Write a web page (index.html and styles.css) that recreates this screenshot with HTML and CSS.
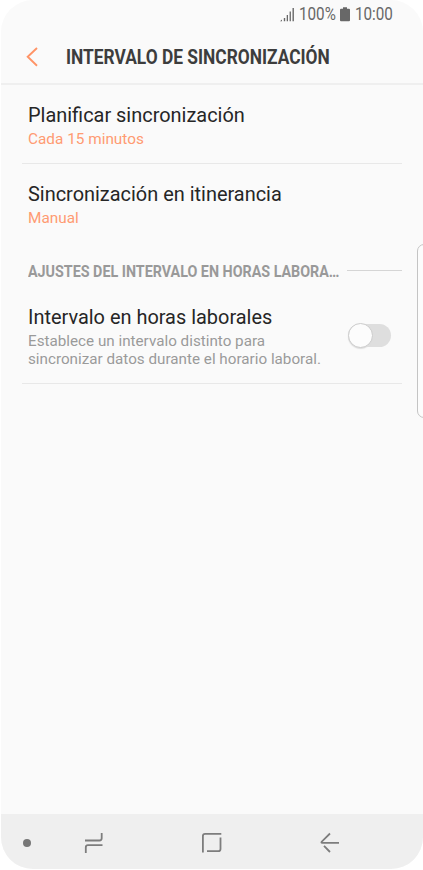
FILE: index.html
```html
<!DOCTYPE html>
<html lang="es">
<head>
<meta charset="utf-8">
<title>Intervalo de sincronización</title>
<link rel="stylesheet" href="styles.css">
</head>
<body>
<div class="screen">
  <div class="status">
    <svg class="signal" width="15" height="15" viewBox="0 0 15 15"><path d="M0 14.200l2-1.700v1.700zM3.800 11h1.400v3.200H3.800zM6.700 8h1.300v6.200H6.700zM9.600 4.500h1.300v9.700H9.600zM12.500 1h1.400v13.200h-1.400z"/></svg>
    <span class="charge"><span class="condensed">100%</span></span>
    <svg class="battery" width="10" height="15" viewBox="0 0 10 15"><path d="M3 .3h4v1.500h2q1 0 1 1v10.500q0 1-1 1H1q-1 0-1-1V2.800q0-1 1-1h2z"/></svg>
    <span class="clock"><span class="condensed">10:00</span></span>
  </div>
  <header class="header">
    <svg class="back" width="12" height="20" viewBox="0 0 12 20"><path d="M11 1L1.700 9.800l9.300 8.900"/></svg>
    <h1 class="title"><span class="condensed">INTERVALO DE SINCRONIZACIÓN</span></h1>
  </header>
  <main class="list">
    <section class="row row-first">
      <h2 class="name">Planificar sincronización</h2>
      <p class="value">Cada 15 minutos</p>
    </section>
    <section class="row row-second">
      <h2 class="name">Sincronización en itinerancia</h2>
      <p class="value">Manual</p>
    </section>
    <div class="group"><span class="group-name"><span class="condensed">AJUSTES DEL INTERVALO EN HORAS LABORA…</span></span></div>
    <section class="row row-toggle">
      <div>
        <h2 class="name">Intervalo en horas laborales</h2>
        <p class="note">Establece un intervalo distinto para<br>sincronizar datos durante el horario laboral.</p>
      </div>
      <div class="toggle"><div class="knob"></div></div>
    </section>
  </main>
  <nav class="nav">
    <span class="dot"></span>
    <svg class="recents" width="20" height="22" viewBox="0 0 20 22"><path d="M1 8.500h14.500q2.200 0 2.200-2.200V1M18.500 13.200H4q-2.200 0-2.200 2.200V21"/></svg>
    <svg class="home" width="22" height="22" viewBox="0 0 22 22"><path d="M1.900 20.500V4q0-2.200 2.200-2.200h16.200M19.500 5.500V17q0 2.200-2.200 2.200H6"/></svg>
    <svg class="return" width="20" height="22" viewBox="0 0 20 22"><path d="M10 1.500L1.700 9.700Q1 10.800 2.200 10.800H19M4 13.800l6 6.200"/></svg>
  </nav>
  <div class="edge"></div>
</div>
</body>
</html>
```
FILE: styles.css
```css
* { box-sizing: border-box; }
body { margin: 0; background: #fff; font-family: Roboto, "Liberation Sans", sans-serif; }
h1, h2, p { margin: 0; font-weight: 400; }
.screen {
  position: relative;
  display: flex;
  flex-direction: column;
  height: 869px;
  margin-left: 1px;
  background: #fafafa;
  border-radius: 32px;
  overflow: hidden;
}
.condensed {
  display: inline-block;
  transform: scaleX(.87);
  transform-origin: 0 50%;
  white-space: nowrap;
}
.status {
  display: flex;
  align-items: center;
  height: 29px;
  padding-left: 279px;
  color: #686868;
  fill: #686868;
  font-size: 17.500px;
  line-height: 29px;
}
.signal { margin-right: 4px; }
.charge { width: 41px; }
.battery { margin-right: 5px; }
.clock { width: 40px; }
.header {
  display: flex;
  align-items: center;
  height: 56px;
  padding: 1px 0 0 25px;
  border-bottom: 2px solid #efefef;
}
.back { margin-right: 28px; fill: none; stroke: #ff9467; stroke-width: 1.900; }
.title { color: #3d3d3d; font-size: 19.950px; font-weight: 700; line-height: 28px; }
.list { flex: 1; padding: 0 21px; }
.row { padding-left: 6px; border-bottom: 1px solid #e8e8e8; }
.row-first { height: 79px; padding-top: 16px; }
.row-second { height: 88px; padding-top: 16px; border-bottom: 0; }
.name { margin-bottom: -2px; color: #262626; font-size: 19.930px; line-height: 30px; white-space: nowrap; }
.value { color: #ff9b72; font-size: 15.350px; line-height: 20px; }
.group { display: flex; align-items: center; height: 37px; margin-bottom: 1px; padding-left: 6px; }
.group::after { content: ""; flex: 1; height: 1px; background: #d5d5d5; }
.group-name { width: 319px; padding-top: 2px; color: #999; font-size: 16.450px; font-weight: 700; white-space: nowrap; }
.row-toggle { display: flex; justify-content: space-between; height: 94px; padding-top: 13px; padding-right: 11px; }
.note { padding-top: 1px; color: #9a9a9a; font-size: 15.230px; line-height: 18px; white-space: nowrap; }
.toggle { flex: none; width: 43px; height: 23px; margin-top: 21px; border-radius: 12px; background: #dedede; }
.knob { width: 25px; height: 25px; margin-top: -1px; border-radius: 50%; background: #fcfcfc; border: 1px solid #ccc; box-shadow: 0 1px 1px #ddd; }
.nav {
  display: flex;
  align-items: center;
  height: 55px;
  padding: 3px 82px 0 22px;
  background: #efefef;
  fill: none;
  stroke: #7d7d7d;
  stroke-width: 1.800;
}
.dot { width: 8px; height: 8px; border-radius: 50%; background: #777; }
.recents { margin-left: 53px; }
.home { margin-left: 97px; }
.return { margin-left: 97px; }
.edge {
  position: absolute;
  top: 244px;
  right: -8px;
  width: 14px;
  height: 174px;
  border: 1px solid #c4c4c4;
  border-radius: 7px;
  background: #fcfcfc;
}
```
